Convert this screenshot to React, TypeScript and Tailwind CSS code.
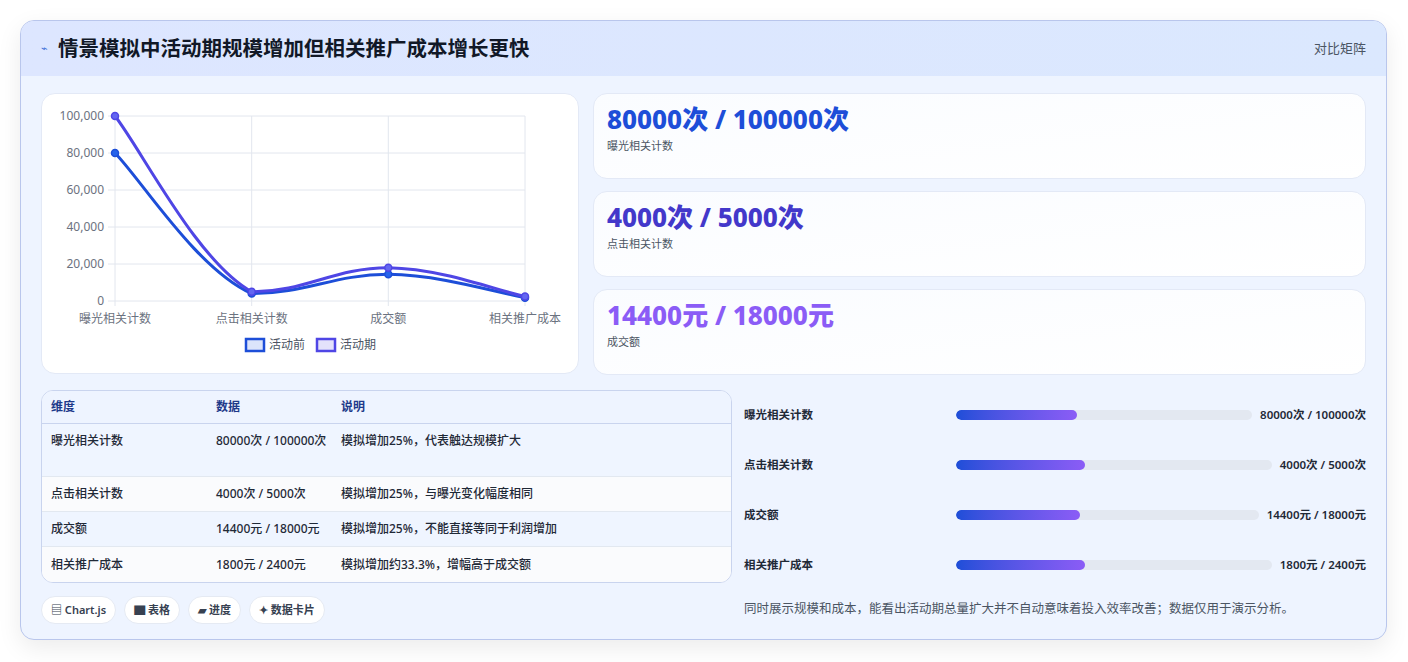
import React from "react";

const F = { fontFamily: '"Noto Sans", "Noto Sans CJK SC", sans-serif' };

const X = [73, 209.7, 346.3, 483];
const yv = (v: number) => 207 - (v / 100000) * 185;
function path(vals: number[]) {
  const p = vals.map((v, i) => [X[i], yv(v)]);
  let d = `M${p[0][0]},${p[0][1]}`;
  const t = 0.4;
  const cl = (y: number, a: number, b: number) => Math.min(Math.max(y, Math.min(a, b)), Math.max(a, b));
  for (let i = 0; i < p.length - 1; i++) {
    const p0 = p[i - 1] || p[i], p1 = p[i], p2 = p[i + 1], p3 = p[i + 2] || p2;
    const c1 = [p1[0] + (p2[0] - p0[0]) * t / 2, cl(p1[1] + (p2[1] - p0[1]) * t / 2, p1[1], p2[1])];
    const c2 = [p2[0] - (p3[0] - p1[0]) * t / 2, cl(p2[1] - (p3[1] - p1[1]) * t / 2, p1[1], p2[1])];
    d += ` C${c1[0]},${c1[1]} ${c2[0]},${c2[1]} ${p2[0]},${p2[1]}`;
  }
  return d;
}
const before = [80000, 4000, 14400, 1800];
const after = [100000, 5000, 18000, 2400];
const cats = ["曝光相关计数", "点击相关计数", "成交额", "相关推广成本"];

function Chart() {
  return (
    <svg width="538" height="280" viewBox="0 0 538 280" style={F}>
      {[0, 20000, 40000, 60000, 80000, 100000].map((v) => (
        <g key={v}>
          <line x1={66} x2={483} y1={yv(v)} y2={yv(v)} stroke="#e2e6ee" />
          <text x={62} y={yv(v) + 4} textAnchor="end" fontSize="12" fill="#6b7280">{v.toLocaleString("en-US")}</text>
        </g>
      ))}
      {X.map((x, i) => (
        <g key={i}>
          <line x1={x} x2={x} y1={22} y2={212} stroke="#e2e6ee" />
          <text x={x} y={229} textAnchor="middle" fontSize="12" fill="#6b7280">{cats[i]}</text>
        </g>
      ))}
      <path d={path(before)} fill="none" stroke="#1d4ed8" strokeWidth="3" />
      <path d={path(after)} fill="none" stroke="#4f46e5" strokeWidth="3" />
      {before.map((v, i) => <circle key={"b" + i} cx={X[i]} cy={yv(v)} r="3.5" fill="#2563eb" stroke="#1d4ed8" strokeWidth="1.5" />)}
      {after.map((v, i) => <circle key={"a" + i} cx={X[i]} cy={yv(v)} r="3.5" fill="#6366f1" stroke="#4f46e5" strokeWidth="1.5" />)}
      <rect x={204} y={245} width={18} height={12} fill="#dbe4fb" stroke="#1d4ed8" strokeWidth="2.5" />
      <text x={227} y={255} fontSize="12" fill="#4b5563">活动前</text>
      <rect x={275} y={245} width={18} height={12} fill="#e4e2fb" stroke="#4f46e5" strokeWidth="2.5" />
      <text x={298} y={255} fontSize="12" fill="#4b5563">活动期</text>
    </svg>
  );
}

const stats = [
  ["80000次 / 100000次", "曝光相关计数", "text-[#1d4ed8]"],
  ["4000次 / 5000次", "点击相关计数", "text-[#4338ca]"],
  ["14400元 / 18000元", "成交额", "text-[#8b5cf6]"],
];
const rows = [
  ["曝光相关计数", "80000次 / 100000次", "模拟增加25%，代表触达规模扩大"],
  ["点击相关计数", "4000次 / 5000次", "模拟增加25%，与曝光变化幅度相同"],
  ["成交额", "14400元 / 18000元", "模拟增加25%，不能直接等同于利润增加"],
  ["相关推广成本", "1800元 / 2400元", "模拟增加约33.3%，增幅高于成交额"],
];
const tags = ["▤ Chart.js", "▇ 表格", "▰ 进度", "✦ 数据卡片"];

export default function App() {
  return (
    <div className="w-[1408px] h-[662px] bg-white pt-5 px-5" style={F}>
      <div className="w-[1367px] h-[620px] rounded-[14px] border border-[#b9c6ec] bg-[#eef4ff] overflow-hidden shadow-[0_8px_24px_rgba(0,0,0,0.08)]">
        <div className="h-[55px] bg-gradient-to-r from-[#dde6ff] to-[#dbe8fe] flex items-center justify-between pl-5 pr-5">
          <div className="flex items-center gap-2.5">
            <span className="text-[#3b6fd8] text-[11px]">⌁</span>
            <span className="text-[20.5px] font-bold text-[#111827]">情景模拟中活动期规模增加但相关推广成本增长更快</span>
          </div>
          <span className="text-[13px] text-[#4b5563]">对比矩阵</span>
        </div>
        <div className="px-5 pt-[17px]">
          <div className="flex gap-[14px]">
            <div className="w-[538px] h-[281px] bg-white rounded-[14px] border border-[#e3e9f6] overflow-hidden"><Chart /></div>
            <div className="flex-1 flex flex-col gap-[12px]">
              {stats.map(([v, l, c]) => (
                <div key={l} className="h-[86px] rounded-[14px] border border-[#e3e9f6] bg-gradient-to-br from-[#fafcff] to-white px-[13px] pt-[7px]">
                  <div className={`text-[26px] font-extrabold leading-[36px] ${c}`}>{v}</div>
                  <div className="text-[11px] text-[#4b5563] mt-[1px]">{l}</div>
                </div>
              ))}
            </div>
          </div>
          <div className="flex gap-3 mt-[15px]">
            <div className="w-[691px]">
              <div className="rounded-[12px] border border-[#c9d4ee] overflow-hidden bg-white text-[12px]">
                <div className="flex h-[33px] items-center bg-[#eef4ff] text-[#1e3a8a] font-semibold border-b border-[#c9d4ee]">
                  <div className="w-[174px] pl-[9px]">维度</div><div className="w-[125px]">数据</div><div className="flex-1">说明</div>
                </div>
                {rows.map((r, i) => (
                  <div key={i} className={`flex ${i === 0 ? "h-[53px] pt-[8px]" : "h-[35px] items-center"} ${i % 2 ? "bg-[#fafbfd]" : "bg-[#eff5ff]"} text-[#1f2937] font-medium ${i < 3 ? "border-b border-[#e2e8f0]" : ""}`}>
                    <div className="w-[174px] pl-[9px]">{r[0]}</div>
                    <div className={`w-[125px] pr-[14px] ${i === 0 ? "leading-[18px]" : ""}`}>{r[1]}</div>
                    <div className="flex-1">{r[2]}</div>
                  </div>
                ))}
              </div>
              <div className="flex gap-2 mt-[13px]">
                {tags.map((t) => (
                  <span key={t} className="h-[28px] px-[9px] flex items-center rounded-full bg-white border border-[#e5eaf3] text-[11px] font-semibold text-[#374151]">{t}</span>
                ))}
              </div>
            </div>
            <div className="flex-1">
              {rows.map((r, i) => (
                <div key={i} className="h-[50px] flex items-center gap-2 text-[11.5px] font-semibold text-[#1f2937]">
                  <div className="w-[204px]">{r[0]}</div>
                  <div className="flex-1 h-[10px] rounded-full bg-[#e3e8f1] overflow-hidden">
                    <div className="h-full rounded-full bg-gradient-to-r from-[#1d4ed8] to-[#8b5cf6]" style={{ width: "41%" }} />
                  </div>
                  <div className="whitespace-nowrap">{r[1]}</div>
                </div>
              ))}
              <div className="mt-[10px] text-[12.5px] text-[#4b5563]">同时展示规模和成本，能看出活动期总量扩大并不自动意味着投入效率改善；数据仅用于演示分析。</div>
            </div>
          </div>
        </div>
      </div>
    </div>
  );
}
